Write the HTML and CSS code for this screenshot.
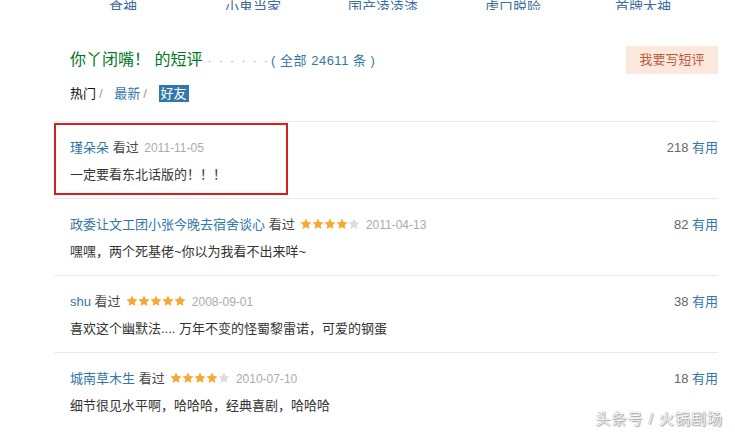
FILE: index.html
```html
<!DOCTYPE html>
<html lang="zh-CN">
<head>
    <meta charset="UTF-8">
    <title>你丫闭嘴！的短评</title>
    <link rel="stylesheet" href="styles.css">
</head>
<body>
<svg class="defs" width="0" height="0">
    <symbol id="star" viewBox="0 0 24 24">
        <path d="M12 1l3.3 7.1 7.7.9-5.8 5.3 1.7 7.7L12 18.1 5.1 22l1.7-7.7L1 9l7.7-.9z"/>
    </symbol>
</svg>
<div class="page">
    <div class="related">
        <a href="#">食神</a>
        <a href="#">小鬼当家</a>
        <a href="#">国产凌凌漆</a>
        <a href="#">虎口脱险</a>
        <a href="#">首牌大神</a>
    </div>

    <div class="header-row">
        <h2 class="title">你丫闭嘴！ 的短评<span class="dots">· · · · · ·</span><span class="all">( <a href="#">全部 24611 条</a> )</span></h2>
        <a href="#" class="write-btn">我要写短评</a>
    </div>

    <div class="tabs">
        <span class="tab-hot">热门</span><span class="sep">/</span>
        <a href="#">最新</a><span class="sep">/</span>
        <a href="#" class="tab-on">好友</a>
    </div>

    <div class="comments">
        <div class="comment">
            <div class="mark"></div>
            <div class="meta">
                <span><a href="#">瑾朵朵</a> 看过 <span class="date">2011-11-05</span></span>
                <span class="votes">218 <a href="#">有用</a></span>
            </div>
            <p class="text">一定要看东北话版的！！！</p>
        </div>
        <div class="comment">
            <div class="meta">
                <span><a href="#">政委让文工团小张今晚去宿舍谈心</a> 看过
                    <span class="stars">
                        <svg class="on"><use href="#star"/></svg><svg class="on"><use href="#star"/></svg><svg class="on"><use href="#star"/></svg><svg class="on"><use href="#star"/></svg><svg class="off"><use href="#star"/></svg>
                    </span>
                    <span class="date">2011-04-13</span></span>
                <span class="votes">82 <a href="#">有用</a></span>
            </div>
            <p class="text">嘿嘿，两个死基佬~你以为我看不出来咩~</p>
        </div>
        <div class="comment">
            <div class="meta">
                <span><a href="#">shu</a> 看过
                    <span class="stars">
                        <svg class="on"><use href="#star"/></svg><svg class="on"><use href="#star"/></svg><svg class="on"><use href="#star"/></svg><svg class="on"><use href="#star"/></svg><svg class="on"><use href="#star"/></svg>
                    </span>
                    <span class="date">2008-09-01</span></span>
                <span class="votes">38 <a href="#">有用</a></span>
            </div>
            <p class="text">喜欢这个幽默法.... 万年不变的怪蜀黎雷诺，可爱的钢蛋</p>
        </div>
        <div class="comment">
            <div class="meta">
                <span><a href="#">城南草木生</a> 看过
                    <span class="stars">
                        <svg class="on"><use href="#star"/></svg><svg class="on"><use href="#star"/></svg><svg class="on"><use href="#star"/></svg><svg class="on"><use href="#star"/></svg><svg class="off"><use href="#star"/></svg>
                    </span>
                    <span class="date">2010-07-10</span></span>
                <span class="votes">18 <a href="#">有用</a></span>
            </div>
            <p class="text">细节很见水平啊，哈哈哈，经典喜剧，哈哈哈</p>
        </div>
    </div>
</div>
<div class="watermark">头条号 / 火锅剧场</div>
</body>
</html>
```

FILE: styles.css
```css
body {
    margin: 0;
    background-color: #fff;
    font-family: "Liberation Sans", Arial, "Noto Sans CJK SC", sans-serif;
    font-size: 13px;
    color: #494949;
    overflow: hidden;
}

a {
    color: #3377aa;
    text-decoration: none;
}

.defs {
    position: absolute;
}

.page {
    width: 664px;
    margin-left: 54px;
}

.related {
    height: 10px;
    overflow: hidden;
    display: grid;
    grid-template-columns: repeat(5, 130px);
    align-items: end;
    padding-left: 4px;
}

.related a {
    font-size: 14px;
    line-height: 14px;
    text-align: center;
    color: #3e6f9a;
}

.header-row {
    display: flex;
    justify-content: space-between;
    align-items: center;
    height: 28px;
    margin-top: 36px;
    padding-left: 16px;
}

.title {
    margin: 0;
    font-size: 16px;
    font-weight: normal;
    color: #007722;
    line-height: 20px;
}

.dots {
    color: #aaa;
    font-size: 12px;
    margin-left: 5px;
    letter-spacing: 2px;
}

.all {
    font-size: 13px;
    color: #3377aa;
    margin-left: 1px;
    letter-spacing: 0.5px;
}

.write-btn {
    display: block;
    width: 92px;
    height: 28px;
    line-height: 28px;
    text-align: center;
    background-color: #fbe8dc;
    color: #bb5a3c;
    font-size: 13px;
}

.tabs {
    margin-top: 11px;
    padding-left: 16px;
    line-height: 18px;
    height: 18px;
}

.tab-hot {
    color: #111;
}

.sep {
    color: #999;
    margin: 0 8px 0 3px;
}

.tab-on {
    background-color: #3377aa;
    color: #fff;
    padding: 1px 2px;
}

.comments {
    margin-top: 18px;
}

.comment {
    position: relative;
    border-top: 1px solid #eaeaea;
    padding: 17px 0 14px 16px;
}

.mark {
    position: absolute;
    left: 0;
    top: 1px;
    width: 230px;
    height: 68px;
    border: 2px solid #d81e1e;
}

.meta {
    display: flex;
    justify-content: space-between;
    line-height: 18px;
    height: 18px;
}

.date {
    color: #aaa;
    font-size: 12px;
    margin-left: 2px;
}

.stars {
    display: inline-flex;
    vertical-align: -1px;
    margin-left: 2px;
}

.stars svg {
    width: 12px;
    height: 12px;
}

.stars .on {
    fill: #f8a730;
}

.stars .off {
    fill: #ddd;
}

.votes {
    color: #666;
}

.text {
    margin: 9px 0 0;
    line-height: 18px;
    color: #333;
}

.watermark {
    position: absolute;
    right: 12px;
    bottom: 6px;
    font-size: 15px;
    color: #f6f6f6;
    text-shadow: 0 0 1px #777, 1px 1px 1px #aaa;
    letter-spacing: 1px;
}
```
